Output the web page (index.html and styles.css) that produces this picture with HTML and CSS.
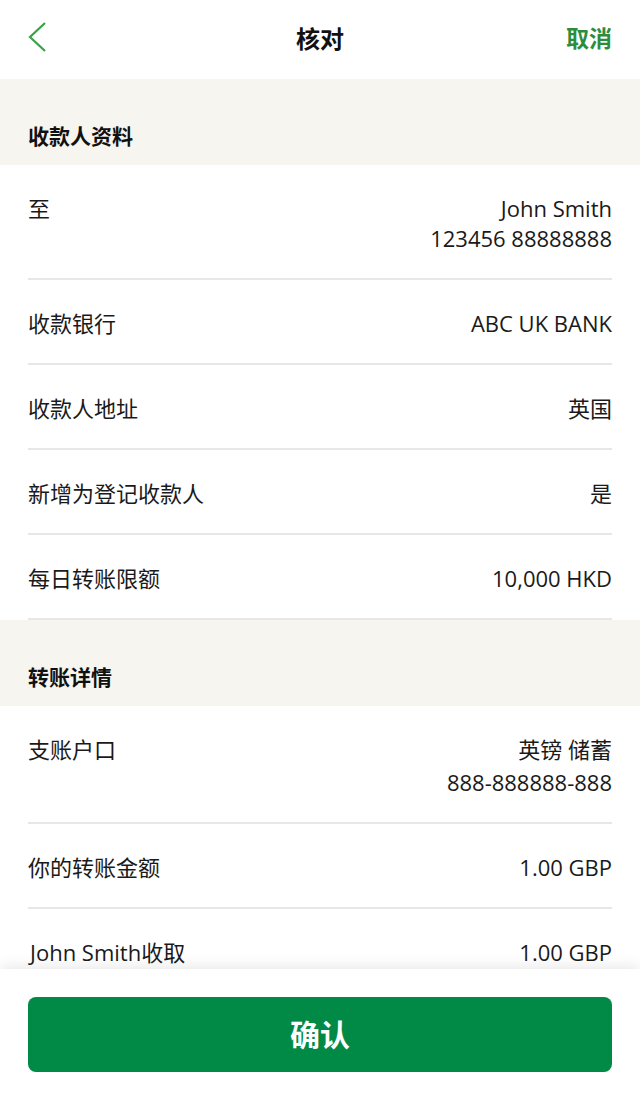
FILE: index.html
```html
<!DOCTYPE html>
<html lang="zh-CN">
<head>
    <meta charset="UTF-8">
    <meta name="viewport" content="width=device-width, initial-scale=1.0">
    <title>核对</title>
    <link rel="stylesheet" href="styles.css">
</head>
<body>
    <div class="page">
        <div class="topbar">
            <a class="back" href="#">
                <svg width="20" height="32" viewBox="0 0 20 32">
                    <polyline points="17,2 2,16 17,30" fill="none" stroke="#36a346" stroke-width="2.2"/>
                </svg>
            </a>
            <h1>核对</h1>
            <a class="cancel" href="#">取消</a>
        </div>

        <div class="content">
            <div class="section-title">收款人资料</div>
            <div class="row">
                <div class="label">至</div>
                <div class="value">John Smith<br>123456 88888888</div>
            </div>
            <div class="row">
                <div class="label">收款银行</div>
                <div class="value">ABC UK BANK</div>
            </div>
            <div class="row">
                <div class="label">收款人地址</div>
                <div class="value">英国</div>
            </div>
            <div class="row">
                <div class="label">新增为登记收款人</div>
                <div class="value">是</div>
            </div>
            <div class="row">
                <div class="label">每日转账限额</div>
                <div class="value">10,000 HKD</div>
            </div>

            <div class="section-title">转账详情</div>
            <div class="row">
                <div class="label">支账户口</div>
                <div class="value">英镑 储蓄<span class="sub">888-888888-888</span></div>
            </div>
            <div class="row">
                <div class="label">你的转账金额</div>
                <div class="value">1.00 GBP</div>
            </div>
            <div class="row">
                <div class="label indent">John Smith收取</div>
                <div class="value">1.00 GBP</div>
            </div>
        </div>

        <div class="footer">
            <button class="confirm-btn">确认</button>
        </div>
    </div>
</body>
</html>
```

FILE: styles.css
```css
body {
    font-family: "Open Sans", "Noto Sans CJK SC", sans-serif;
    margin: 0;
    color: #1a1a1a;
    background-color: white;
}
.page {
    height: 1100px;
    display: flex;
    flex-direction: column;
    overflow: hidden;
}
.topbar {
    height: 79px;
    box-sizing: border-box;
    flex-shrink: 0;
    display: grid;
    grid-template-columns: 1fr auto 1fr;
    align-items: center;
    padding: 0 28px 5px;
}
.back {
    display: flex;
    align-items: center;
}
h1 {
    margin: 0;
    font-size: 24px;
    font-weight: bold;
    color: #111;
}
.cancel {
    justify-self: end;
    font-size: 23px;
    font-weight: bold;
    color: #2e8c3d;
    text-decoration: none;
}
.content {
    flex: 1;
    overflow: hidden;
}
.section-title {
    background-color: #f6f5f0;
    height: 86px;
    box-sizing: border-box;
    padding: 43px 28px 15px;
    font-size: 21px;
    line-height: 28px;
    font-weight: bold;
    color: #111;
}
.row {
    display: flex;
    justify-content: space-between;
    margin: 0 28px;
    padding: 28px 0 25px;
    border-bottom: 2px solid #e7e7e7;
    font-size: 22px;
    line-height: 30px;
}
.value {
    text-align: right;
}
.sub {
    display: block;
    margin-top: 3px;
}
.indent {
    padding-left: 2px;
}
.footer {
    position: relative;
    z-index: 1;
    flex-shrink: 0;
    background-color: white;
    padding: 28px;
    box-shadow: 0 -4px 12px rgba(0,0,0,0.08);
}
.confirm-btn {
    display: block;
    width: 100%;
    height: 75px;
    border: none;
    border-radius: 8px;
    background-color: #008a46;
    color: white;
    font-family: "Open Sans", "Noto Sans CJK SC", sans-serif;
    font-size: 30px;
    font-weight: bold;
    padding-bottom: 4px;
    cursor: pointer;
}
```
